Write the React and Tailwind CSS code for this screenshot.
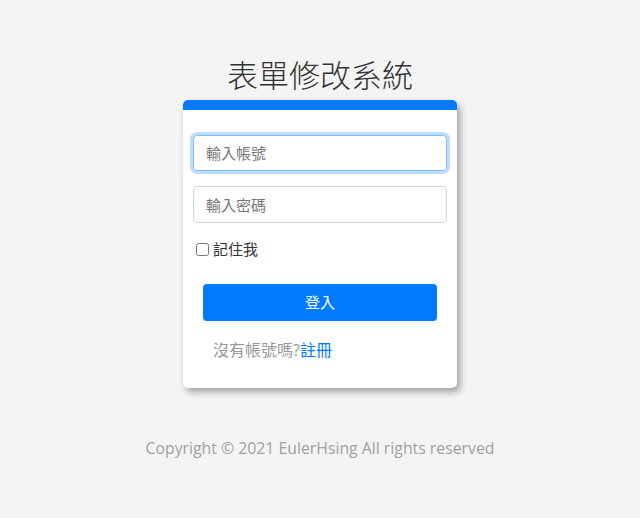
import React from 'react';

const font = { fontFamily: '"Open Sans", "Noto Sans CJK TC", sans-serif' };

export default function App() {
  return (
    <div
      className="min-h-[518px] w-full bg-[#f4f4f4] flex flex-col items-center text-[#333]"
      style={font}
    >
      <h1 className="mt-[56px] text-[31px] leading-[38px] font-light text-[#333]">
        表單修改系統
      </h1>

      {/* Login card */}
      <div className="mt-[6px] w-[274px] bg-white rounded-[5px] border-t-[10px] border-[#007bff] shadow-[3px_4px_7px_rgba(0,0,0,0.35)] px-[10px] pt-[25px] pb-[26px]">
        <input
          autoFocus
          type="text"
          placeholder="輸入帳號"
          className="block w-full h-[36px] px-[12px] text-[15px] rounded-[4px] border border-[#80bdff] outline-none ring-[3px] ring-[#007bff]/25 placeholder:text-[#777]"
        />
        <input
          type="password"
          placeholder="輸入密碼"
          className="block w-full h-[37px] mt-[15px] px-[12px] text-[15px] rounded-[4px] border border-[#ced4da] outline-none placeholder:text-[#777]"
        />

        <label className="flex items-center mt-[14px] ml-[3px] text-[15px] leading-[24px] text-[#333]">
          <input type="checkbox" className="w-[13px] h-[13px] mr-[4px]" />
          記住我
        </label>

        <button className="block w-[234px] h-[37px] mx-auto mt-[23px] rounded-[4px] bg-[#007bff] text-white text-[15px]">
          登入
        </button>

        <p className="mt-[17px] ml-[20px] text-[16px] leading-[24px] text-[#999]">
          沒有帳號嗎?<a href="#" className="text-[#007bff]">註冊</a>
        </p>
      </div>

      <p className="mt-[49px] text-[15.8px] text-[#a0a0a0]">
        Copyright © 2021 EulerHsing All rights reserved
      </p>
    </div>
  );
}
